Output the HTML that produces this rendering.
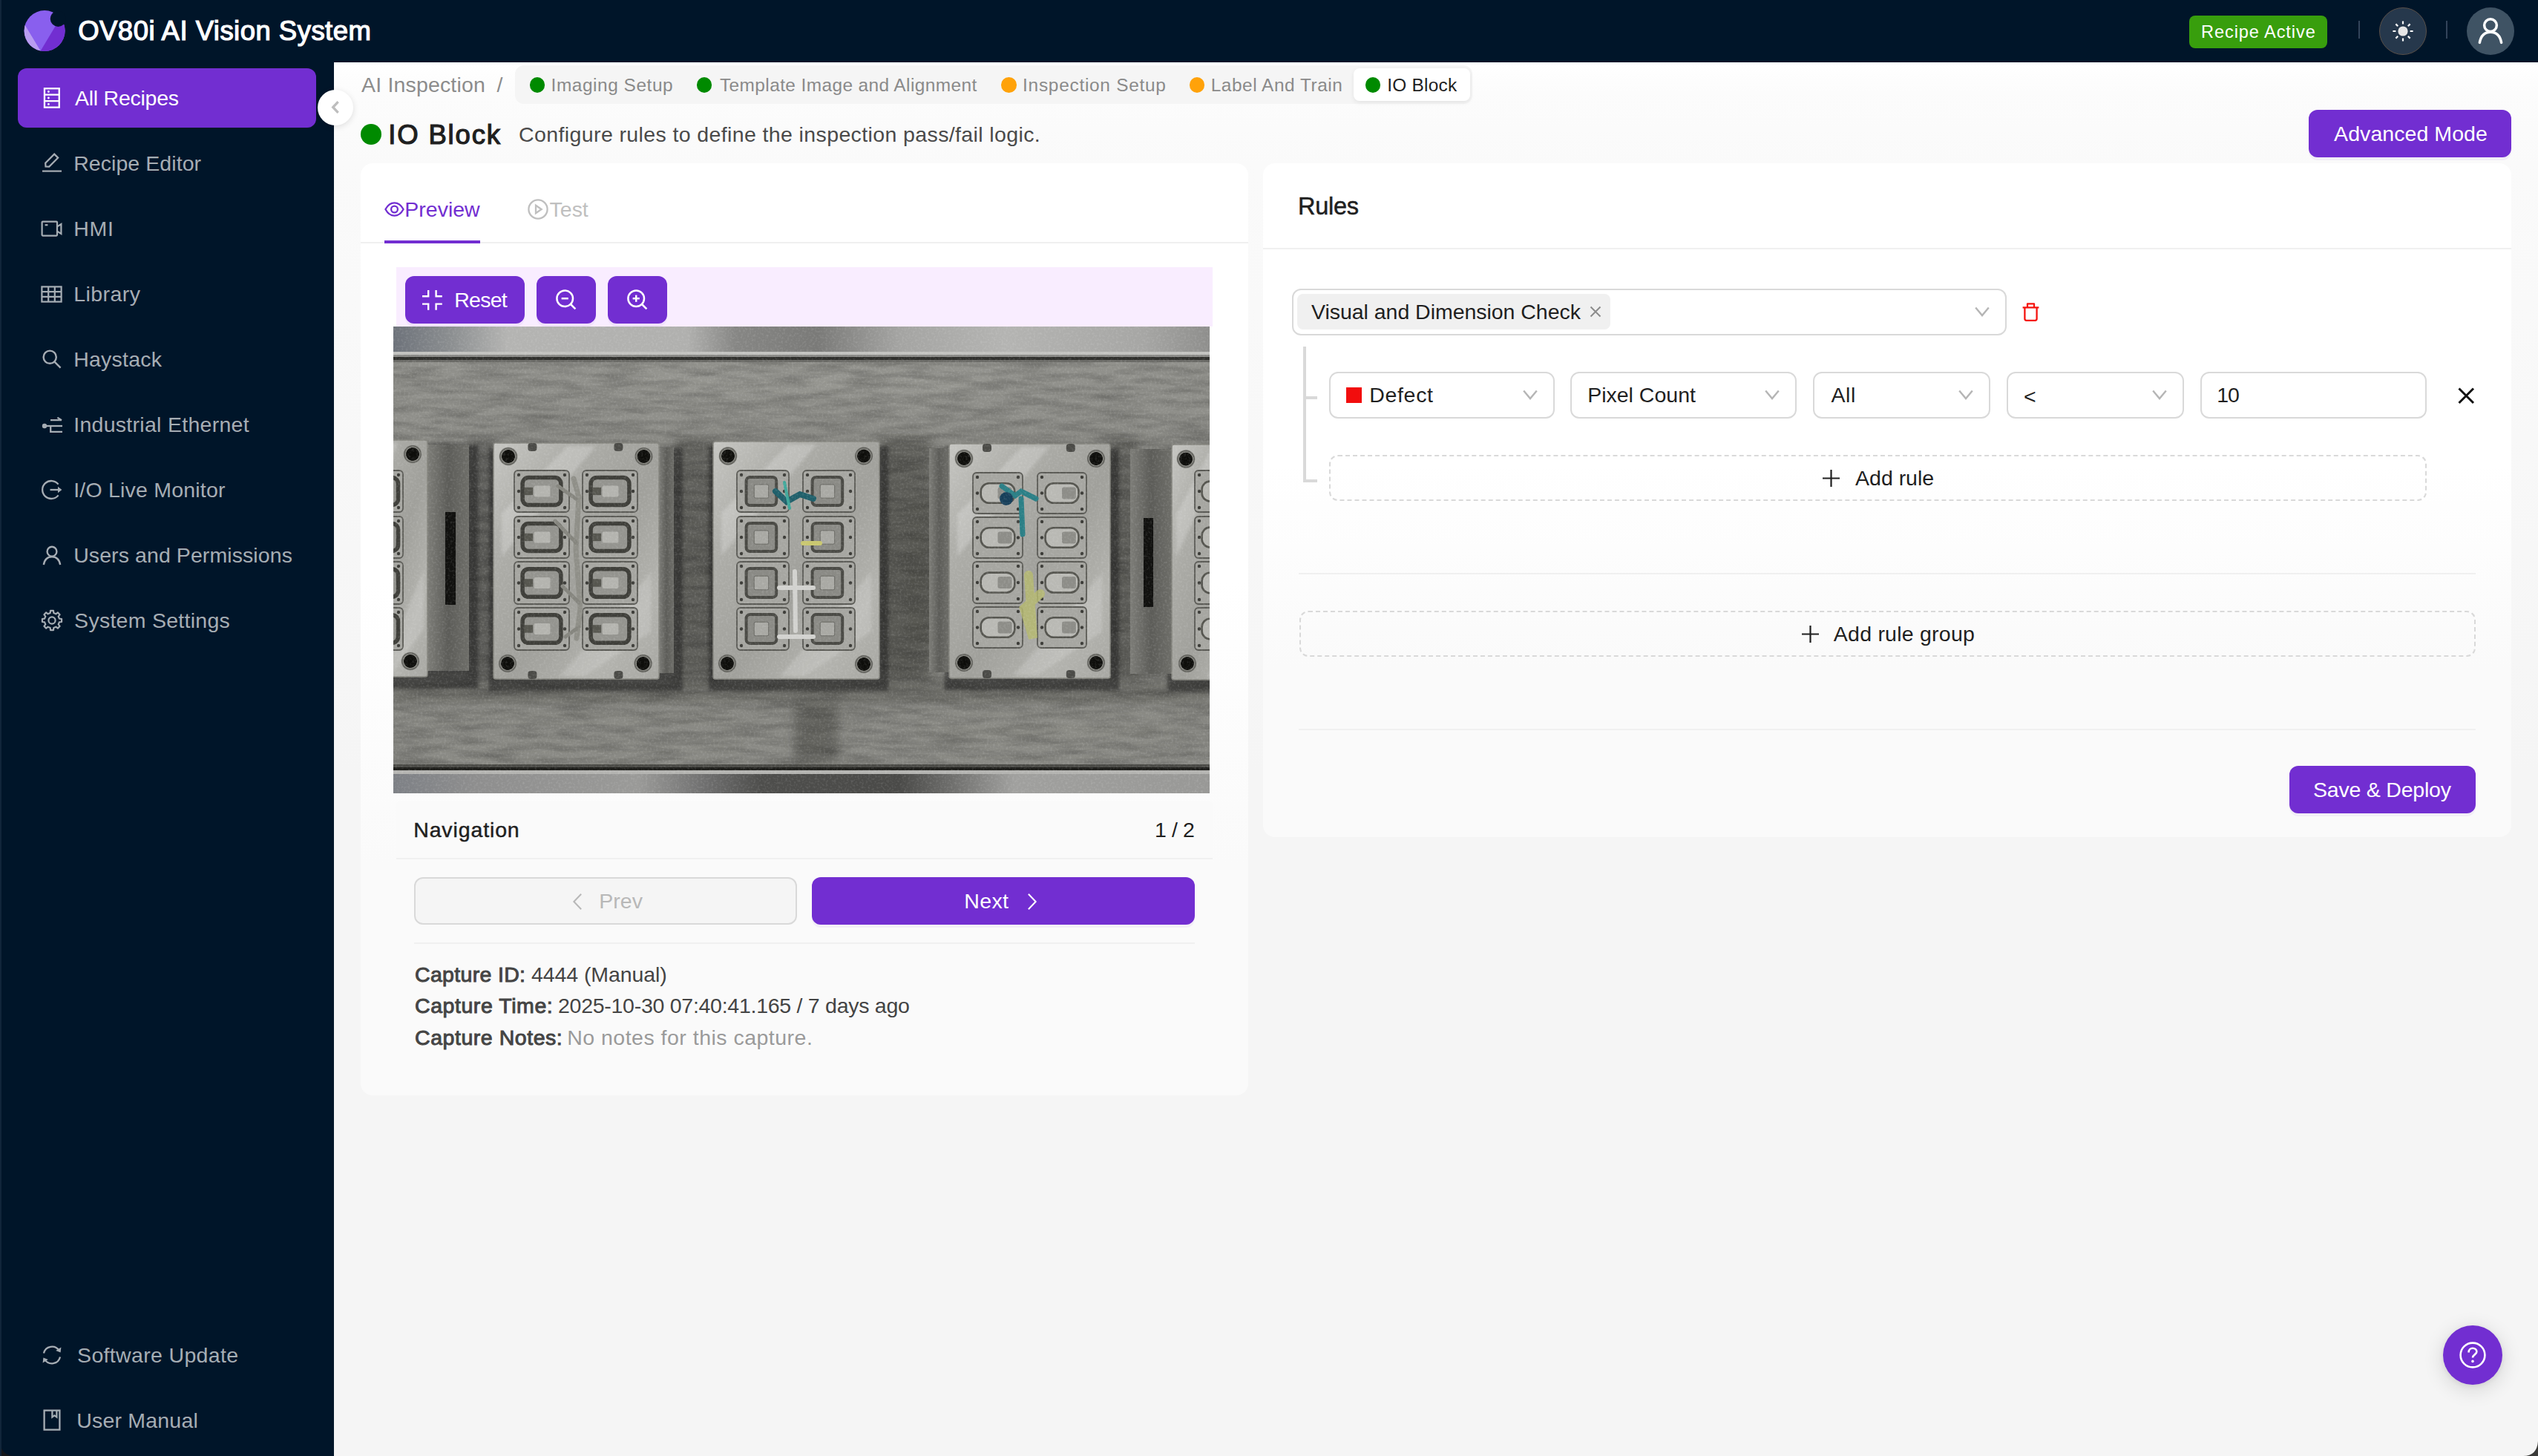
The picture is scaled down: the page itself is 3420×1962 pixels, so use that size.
<!DOCTYPE html>
<html lang="en">
<head>
<meta charset="utf-8">
<title>OV80i AI Vision System</title>
<style>
*{box-sizing:border-box;margin:0;padding:0}
html,body{width:3420px;height:1962px;overflow:hidden;background:#f5f5f5}
body{font-family:"Liberation Sans",sans-serif;color:#1f1f1f;position:relative}
#app{position:absolute;left:0;top:0;width:3420px;height:1962px;overflow:hidden;background:#f5f5f5}
header,aside,main,section,nav,div.g{position:absolute;left:0;top:0}
.b{position:absolute}
.ic{position:absolute;overflow:visible}
.t{position:absolute;white-space:nowrap;line-height:1}
.t b{font-weight:700}
#hdr{width:3420px;height:84px;background:#001529}
#side{top:84px;width:450px;height:1878px;background:#001529}
#pagehead{left:450px;top:84px;width:2970px;height:136px;background:linear-gradient(#fff,#fbfbfb 40%,#fafafa)}
.card{position:absolute;border-radius:16px;background:linear-gradient(#fff 0,#fff 45%,#fafafa 75%,#fafafa 100%)}
.btnp{position:absolute;background:#722ed1;border-radius:12px;box-shadow:0 4px 0 rgba(114,46,209,.06)}
.sel{position:absolute;height:63px;border:2px solid #d9d9d9;border-radius:12px;background:#fff}
.dash{position:absolute;border:2px dashed #d9d9d9;border-radius:12px;background:transparent}
.ln{position:absolute;background:#f0f0f0}
.dot{position:absolute;border-radius:50%}
.photo{position:absolute;left:530px;top:440px}
</style>
</head>
<body>
<div id="app">
<header id="hdr">
<svg class="ic " style="left:32px;top:14px" width="56" height="56" viewBox="0 0 56 56" ><defs><clipPath id="lgc"><circle cx="28.1" cy="27.6" r="27.5"/></clipPath></defs>
<g clip-path="url(#lgc)"><rect width="56" height="56" fill="#895fee"/>
<path d="M20.6 58 L47 14 L60 10 L60 60Z" fill="#722ed1"/>
<path d="M-4 10 L1.8 20 L22.6 54.6 L24 60 L-4 60Z" fill="#b99cf1"/></g>
<circle cx="46.4" cy="11.3" r="10.6" fill="#001529"/></svg>
<h1 class="t" id="title" style="left:105.2px;top:24.4px;font-size:36.5px;color:#fff;font-weight:400;-webkit-text-stroke:1.24px #fff;letter-spacing:0.473px;">OV80i AI Vision System</h1>
<div class="b" style="left:2950px;top:21px;width:186px;height:44px;background:#389e0d;border-radius:8px"></div>
<span class="t" id="ractive" style="left:2966.0px;top:32.2px;font-size:23.6px;color:#fff;letter-spacing:0.904px;">Recipe Active</span>
<div class="b" style="left:3178px;top:28px;width:2px;height:24px;background:#33445a"></div>
<div class="b" style="left:3296px;top:28px;width:2px;height:24px;background:#33445a"></div>
<div class="b" style="left:3206px;top:10px;width:64px;height:64px;border-radius:50%;background:#26384c;border:1.5px solid #5a5048"></div>
<svg class="ic " style="left:3223px;top:27px" width="30" height="30" viewBox="0 0 30 30" ><circle cx="15" cy="15" r="6.6" fill="#e6e6e6"/><path d="M24.60 15.00L28.60 15.00M21.79 21.79L24.62 24.62M15.00 24.60L15.00 28.60M8.21 21.79L5.38 24.62M5.40 15.00L1.40 15.00M8.21 8.21L5.38 5.38M15.00 5.40L15.00 1.40M21.79 8.21L24.62 5.38" fill="none" stroke="#fff" stroke-width="2.2" stroke-linecap="butt" stroke-linejoin="round"/></svg>
<div class="b" style="left:3324px;top:10px;width:64px;height:64px;border-radius:50%;background:#3f5364"></div>
<svg class="ic " style="left:3339px;top:23px" width="34" height="36" viewBox="0 0 26 27" ><g fill="none" stroke="#fff" stroke-width="2.7" stroke-linecap="round" stroke-linejoin="round" stroke-linecap="butt"><circle cx="13" cy="8.2" r="6.4"/><path d="M1.8 26 C3.2 18.5 7.6 15.2 13 15.2 C18.4 15.2 22.8 18.5 24.2 26"/></g></svg>
</header>
<aside id="side">
</aside>
<nav class="g">
<div class="b" style="left:24px;top:92px;width:402px;height:80px;background:#722ed1;border-radius:12px"></div>
<svg class="ic " style="left:56px;top:116px" width="28" height="32" viewBox="0 0 28 32" ><g fill="none" stroke="#fff" stroke-width="2.3" stroke-linecap="butt" stroke-linejoin="miter"><rect x="3.95" y="3.25" width="19.8" height="25.4"/><path d="M3.95 11.7H23.75M3.95 20.2H23.75"/></g><g fill="#fff"><circle cx="9.4" cy="7.5" r="1.4"/><circle cx="9.4" cy="16" r="1.4"/><circle cx="9.4" cy="24.4" r="1.4"/></g></svg>
<span class="t" id="m0" style="left:101.0px;top:118.4px;font-size:28.5px;color:#fff;letter-spacing:-0.250px;">All Recipes</span>
<svg class="ic " style="left:55px;top:204px" width="30" height="30" viewBox="0 0 30 30" ><g fill="none" stroke="#a6adb4" stroke-width="2.2" stroke-linecap="round" stroke-linejoin="round"><path d="M6.5 20.5 L6.2 15.6 L18.2 3.6 L23.2 8.6 L11.2 20.6 Z" stroke-linejoin="miter"/><path d="M2 26.6H28" stroke-linecap="butt"/></g></svg>
<span class="t" id="m1" style="left:99.2px;top:206.4px;font-size:28.5px;color:#a6adb4;letter-spacing:0.064px;">Recipe Editor</span>
<svg class="ic " style="left:55px;top:296px" width="30" height="24" viewBox="0 0 30 24" ><g fill="none" stroke="#a6adb4" stroke-width="2.2" stroke-linecap="round" stroke-linejoin="miter"><rect x="1.6" y="2.6" width="20.4" height="19" rx="1"/><path d="M22 9.4 L27.4 6 V19 L22 15.6" /><path d="M5.6 7.2H9.4" stroke-linecap="butt"/></g></svg>
<span class="t" id="m2" style="left:99.2px;top:294.4px;font-size:28.5px;color:#a6adb4;letter-spacing:0.705px;">HMI</span>
<svg class="ic " style="left:55px;top:385px" width="29" height="23" viewBox="0 0 29 23" ><g fill="none" stroke="#a6adb4" stroke-width="2.2" stroke-linecap="butt" stroke-linejoin="miter"><rect x="1.4" y="1.4" width="26.2" height="20.2"/><path d="M1.4 8.2H27.6M1.4 14.8H27.6M10.2 1.4V21.6M18.8 1.4V21.6"/></g></svg>
<span class="t" id="m3" style="left:99.2px;top:382.4px;font-size:28.5px;color:#a6adb4;letter-spacing:0.446px;">Library</span>
<svg class="ic " style="left:56px;top:470px" width="28" height="28" viewBox="0 0 28 28" ><g fill="none" stroke="#a6adb4" stroke-width="2.4" stroke-linecap="round" stroke-linejoin="round"><circle cx="11.2" cy="11.2" r="8.6"/><path d="M17.6 17.6 L25.6 25.6" stroke-linecap="butt"/></g></svg>
<span class="t" id="m4" style="left:99.2px;top:470.4px;font-size:28.5px;color:#a6adb4;letter-spacing:0.220px;">Haystack</span>
<svg class="ic " style="left:56px;top:562px" width="29" height="22" viewBox="0 0 29 22" ><g fill="none" stroke="#a6adb4" stroke-width="2.3" stroke-linecap="butt" stroke-linejoin="miter"><path d="M5 12H28"/><path d="M12 4.2H27 M21.4 0.6 L27 4.2"/><path d="M12.2 12 V19.8 H28"/></g><circle cx="4" cy="12" r="3.2" fill="#a6adb4"/></svg>
<span class="t" id="m5" style="left:99.2px;top:558.4px;font-size:28.5px;color:#a6adb4;letter-spacing:0.286px;">Industrial Ethernet</span>
<svg class="ic " style="left:55px;top:646px" width="29" height="28" viewBox="0 0 29 28" ><g fill="none" stroke="#a6adb4" stroke-width="2.3" stroke-linecap="butt" stroke-linejoin="round"><path d="M23.6 6.6 A12 12 0 1 0 23.6 21.4"/><path d="M12.5 14H25.5"/></g><path d="M23 9.8 L28.4 14 L23 18.2Z" fill="#a6adb4"/></svg>
<span class="t" id="m6" style="left:99.2px;top:646.4px;font-size:28.5px;color:#a6adb4;letter-spacing:0.214px;">I/O Live Monitor</span>
<svg class="ic " style="left:57px;top:735px" width="26" height="27" viewBox="0 0 26 27" ><g fill="none" stroke="#a6adb4" stroke-width="2.4" stroke-linecap="butt" stroke-linejoin="round"><circle cx="13" cy="8.2" r="6.4"/><path d="M1.8 26 C3.2 18.5 7.6 15.2 13 15.2 C18.4 15.2 22.8 18.5 24.2 26"/></g></svg>
<span class="t" id="m7" style="left:99.2px;top:734.4px;font-size:28.5px;color:#a6adb4;letter-spacing:0.084px;">Users and Permissions</span>
<svg class="ic " style="left:56px;top:822px" width="28" height="28" viewBox="0 0 28 28" ><g fill="none" stroke="#a6adb4" stroke-width="2.2" stroke-linecap="round" stroke-linejoin="round"><path d="M11.67 4.07 L12.03 0.95 L15.97 0.95 L16.33 4.07 L19.38 5.33 L21.83 3.38 L24.62 6.17 L22.67 8.62 L23.93 11.67 L27.05 12.03 L27.05 15.97 L23.93 16.33 L22.67 19.38 L24.62 21.83 L21.83 24.62 L19.38 22.67 L16.33 23.93 L15.97 27.05 L12.03 27.05 L11.67 23.93 L8.62 22.67 L6.17 24.62 L3.38 21.83 L5.33 19.38 L4.07 16.33 L0.95 15.97 L0.95 12.03 L4.07 11.67 L5.33 8.62 L3.38 6.17 L6.17 3.38 L8.62 5.33Z"/><circle cx="14" cy="14" r="4.6"/></g></svg>
<span class="t" id="m8" style="left:100.1px;top:822.4px;font-size:28.5px;color:#a6adb4;letter-spacing:0.273px;">System Settings</span>
<svg class="ic " style="left:56px;top:1812px" width="28" height="28" viewBox="0 0 28 28" ><g fill="none" stroke="#a6adb4" stroke-width="2.3" stroke-linecap="butt" stroke-linejoin="round"><path d="M3 11.5 A11.3 11.3 0 0 1 23.6 8"/><path d="M25 16.5 A11.3 11.3 0 0 1 4.4 20"/></g><path d="M26.4 3.6 L25.6 10.6 L19.2 8Z M1.6 24.4 L2.4 17.4 L8.8 20Z" fill="#a6adb4"/></svg>
<span class="t" id="m9" style="left:104.1px;top:1812.3px;font-size:28.5px;color:#a6adb4;letter-spacing:0.333px;">Software Update</span>
<svg class="ic " style="left:58px;top:1899px" width="24" height="30" viewBox="0 0 24 30" ><g fill="none" stroke="#a6adb4" stroke-width="2.3" stroke-linecap="butt" stroke-linejoin="miter"><rect x="1.6" y="1.6" width="20.8" height="26"/><path d="M12.4 1.6 V10.6 L15.4 8.4 L18.4 10.6 V1.6"/></g></svg>
<span class="t" id="m10" style="left:103.2px;top:1900.4px;font-size:28.5px;color:#a6adb4;letter-spacing:0.202px;">User Manual</span>
</nav>
<main class="g">
<div class="b" style="left:450px;top:84px;width:2970px;height:136px;background:linear-gradient(#fff,#fcfcfc 30%,#fafafa)"></div>
<div class="b" style="left:450px;top:220px;width:2970px;height:820px;background:linear-gradient(#fafafa,#f8f8f8 45%,#f5f5f5)"></div>
<div class="b" style="left:428px;top:120.5px;width:48px;height:48px;border-radius:50%;background:#fff;box-shadow:0 2px 8px rgba(0,0,0,.12)"></div>
<svg class="ic " style="left:446.5px;top:136px" width="10" height="17" viewBox="0 0 16 28" ><path d="M14 2 L2.6 14 L14 26" fill="none" stroke="#bdbdbd" stroke-width="5.4" stroke-linecap="butt" stroke-linejoin="miter"/></svg>
<span class="t" id="bc1" style="left:487.1px;top:100.1px;font-size:28.5px;color:#8c8c8c;letter-spacing:0.160px;">AI Inspection</span>
<span class="t" id="bc2" style="left:669.5px;top:100.1px;font-size:28.5px;color:#8c8c8c;letter-spacing:1.978px;">/</span>
<div class="b" style="left:694px;top:88px;width:1290px;height:52px;background:#f5f5f5;border-radius:12px"></div>
<div class="b" style="left:1824px;top:92px;width:157px;height:44px;background:#fff;border-radius:8px;box-shadow:0 2px 6px rgba(0,0,0,.08)"></div>
<div class="dot" style="left:713.8px;top:104px;width:20.5px;height:20.5px;background:#008a00"></div>
<span class="t" id="sg0" style="left:742.6px;top:102.8px;font-size:24.4px;color:#8a8a8a;letter-spacing:0.557px;">Imaging Setup</span>
<div class="dot" style="left:938.7px;top:104px;width:20.5px;height:20.5px;background:#008a00"></div>
<span class="t" id="sg1" style="left:970.0px;top:102.8px;font-size:24.4px;color:#8a8a8a;letter-spacing:0.417px;">Template Image and Alignment</span>
<div class="dot" style="left:1349.3px;top:104px;width:20.5px;height:20.5px;background:#ffa20a"></div>
<span class="t" id="sg2" style="left:1378.1px;top:102.8px;font-size:24.4px;color:#8a8a8a;letter-spacing:0.737px;">Inspection Setup</span>
<div class="dot" style="left:1602.7px;top:104px;width:20.5px;height:20.5px;background:#ffa20a"></div>
<span class="t" id="sg3" style="left:1631.7px;top:102.8px;font-size:24.4px;color:#8a8a8a;letter-spacing:0.549px;">Label And Train</span>
<div class="dot" style="left:1839.7px;top:104px;width:20.5px;height:20.5px;background:#008a00"></div>
<span class="t" id="sg4" style="left:1869.2px;top:102.8px;font-size:24.4px;color:#1f1f1f;letter-spacing:0.255px;">IO Block</span>
<div class="dot" style="left:486px;top:166.7px;width:28px;height:28px;background:#008a00"></div>
<h2 class="t" id="h1" style="left:523.2px;top:163.5px;font-size:36.5px;color:#1f1f1f;font-weight:400;-webkit-text-stroke:1.24px #1f1f1f;letter-spacing:1.852px;">IO Block</h2>
<span class="t" id="desc" style="left:699.1px;top:166.8px;font-size:28.5px;color:#4a4a4a;letter-spacing:0.383px;">Configure rules to define the inspection pass/fail logic.</span>
<div class="btnp" style="left:3111px;top:148px;width:273px;height:64px;"></div>
<span class="t" id="adv" style="left:3145.1px;top:166.4px;font-size:28.5px;color:#fff;letter-spacing:0.066px;">Advanced Mode</span>
<div class="card" style="left:486px;top:220px;width:1196px;height:1256px;"></div>
<svg class="ic " style="left:518px;top:271.7px" width="27" height="20" viewBox="0 0 27 20" ><g fill="none" stroke="#722ed1" stroke-width="2.3" stroke-linecap="round" stroke-linejoin="round"><path d="M1.4 10 C5 3.4 9.6 1.3 13.5 1.3 C17.4 1.3 22 3.4 25.6 10 C22 16.6 17.4 18.7 13.5 18.7 C9.6 18.7 5 16.6 1.4 10Z"/><circle cx="13.5" cy="10" r="4.4"/></g></svg>
<span class="t" id="tab1" style="left:545.3px;top:268.1px;font-size:28.5px;color:#722ed1;letter-spacing:0.004px;">Preview</span>
<svg class="ic " style="left:710.8px;top:268px" width="28" height="28" viewBox="0 0 28 28" ><g fill="none" stroke="#bfbfbf" stroke-width="2.3" stroke-linecap="round" stroke-linejoin="round"><circle cx="14" cy="14" r="12.6"/><path d="M11 8.8 L18.6 14 L11 19.2Z" stroke-linejoin="miter"/></g></svg>
<span class="t" id="tab2" style="left:740.6px;top:268.1px;font-size:28.5px;color:#bfbfbf;letter-spacing:-0.027px;">Test</span>
<div class="ln" style="left:486px;top:326px;width:1196px;height:2px;"></div>
<div class="b" style="left:518px;top:324px;width:129px;height:4px;background:#722ed1"></div>
<div class="b" style="left:534px;top:360px;width:1100px;height:80px;background:#f9edff"></div>
<div class="btnp" style="left:546px;top:372px;width:161px;height:64px;"></div>
<svg class="ic " style="left:568.7px;top:390.5px" width="27" height="27" viewBox="0 0 27 27" ><g fill="none" stroke="#fff" stroke-width="2.4" stroke-linecap="butt" stroke-linejoin="miter"><path d="M0 8.2H8.2V0"/><path d="M26.8 8.2H18.6V0"/><path d="M0 18.6H8.2V26.8"/><path d="M26.8 18.6H18.6V26.8"/></g></svg>
<span class="t" id="reset" style="left:612.3px;top:390.1px;font-size:28.5px;color:#fff;letter-spacing:-0.763px;">Reset</span>
<div class="btnp" style="left:723px;top:372px;width:80px;height:64px;"></div>
<svg class="ic " style="left:749px;top:390px" width="28" height="28" viewBox="0 0 28 28" ><g fill="none" stroke="#fff" stroke-width="2.5" stroke-linecap="butt" stroke-linejoin="round"><circle cx="12.2" cy="12.2" r="10.8"/><path d="M20 20 L26.4 26.4"/><path d="M7.6 12.2H16.8"/></g></svg>
<div class="btnp" style="left:819px;top:372px;width:80px;height:64px;"></div>
<svg class="ic " style="left:845px;top:390px" width="28" height="28" viewBox="0 0 28 28" ><g fill="none" stroke="#fff" stroke-width="2.5" stroke-linecap="butt" stroke-linejoin="round"><circle cx="12.2" cy="12.2" r="10.8"/><path d="M20 20 L26.4 26.4"/><path d="M7.6 12.2H16.8"/><path d="M12.2 7.6V16.8"/></g></svg>
<svg class="photo" width="1100" height="629" viewBox="0 0 1100 629" preserveAspectRatio="none">
<defs>
<linearGradient id="pgTop" x1="0" x2="1" y1="0" y2="0"><stop offset="0" stop-color="#6d727a"/><stop offset=".07" stop-color="#8b8e90"/><stop offset=".14" stop-color="#b4b4b2"/><stop offset=".36" stop-color="#b0b0ae"/><stop offset=".42" stop-color="#868684"/><stop offset=".52" stop-color="#7a7a78"/><stop offset=".62" stop-color="#a4a4a2"/><stop offset=".75" stop-color="#b4b4b2"/><stop offset=".92" stop-color="#a6a6a4"/><stop offset="1" stop-color="#8e8e8c"/></linearGradient>
<linearGradient id="pgBot" x1="0" x2="1" y1="0" y2="0"><stop offset="0" stop-color="#7d8085"/><stop offset=".1" stop-color="#8e8e8e"/><stop offset=".3" stop-color="#9a9a98"/><stop offset=".38" stop-color="#707070"/><stop offset=".45" stop-color="#4e4e4c"/><stop offset=".62" stop-color="#4a4a48"/><stop offset=".68" stop-color="#6c6c6a"/><stop offset=".76" stop-color="#a0a09e"/><stop offset="1" stop-color="#989896"/></linearGradient>
<linearGradient id="pgMid" x1="0" x2="0" y1="0" y2="1"><stop offset="0" stop-color="#92928d"/><stop offset=".2" stop-color="#8f8f8a"/><stop offset=".3" stop-color="#80807b"/><stop offset=".5" stop-color="#73736e"/><stop offset=".72" stop-color="#787873"/><stop offset=".8" stop-color="#888883"/><stop offset="1" stop-color="#8b8b86"/></linearGradient>
<linearGradient id="pgFace" x1="0" x2="1" y1="0" y2="1"><stop offset="0" stop-color="#c6c6c2"/><stop offset=".25" stop-color="#adada8"/><stop offset=".55" stop-color="#a0a09b"/><stop offset=".8" stop-color="#b3b3ae"/><stop offset="1" stop-color="#a8a8a3"/></linearGradient>
<linearGradient id="pgSide" x1="0" x2="1" y1="0" y2="0"><stop offset="0" stop-color="#7d7d78"/><stop offset=".5" stop-color="#5c5c58"/><stop offset="1" stop-color="#6e6e69"/></linearGradient>
<linearGradient id="pgCav" x1="0" x2="0" y1="0" y2="1"><stop offset="0" stop-color="#4b4b46"/><stop offset=".35" stop-color="#7a7a74"/><stop offset=".65" stop-color="#74746e"/><stop offset="1" stop-color="#52524c"/></linearGradient>
<radialGradient id="pgHole"><stop offset="0" stop-color="#0b0b08"/><stop offset=".68" stop-color="#12120f"/><stop offset=".74" stop-color="#8c8c86"/><stop offset=".9" stop-color="#5a5a55"/><stop offset="1" stop-color="#9b9b96"/></radialGradient>
<filter id="pgNoise" x="0" y="0" width="100%" height="100%"><feTurbulence type="fractalNoise" baseFrequency="0.018 0.11" numOctaves="4" seed="7" result="n"/><feColorMatrix type="matrix" values="0 0 0 0 0  0 0 0 0 0  0 0 0 0 0  1.5 0 0 0 -0.52"/></filter>
<filter id="pgGrain" x="0" y="0" width="100%" height="100%"><feTurbulence type="fractalNoise" baseFrequency="0.35" numOctaves="2" seed="3"/><feColorMatrix type="matrix" values="0 0 0 0 1  0 0 0 0 1  0 0 0 0 1  0.9 0 0 0 -0.42"/></filter>
<filter id="pgBlur"><feGaussianBlur stdDeviation="7"/></filter>
<filter id="pgBlur2"><feGaussianBlur stdDeviation="2.2"/></filter>
</defs>
<rect width="1100" height="629" fill="url(#pgMid)"/>
<g filter="url(#pgBlur)" opacity=".5">
<rect x="380" y="150" width="60" height="340" fill="#4a4a45"/>
<rect x="655" y="150" width="70" height="340" fill="#42423e"/>
<rect x="965" y="150" width="40" height="340" fill="#4c4c47"/>
<rect x="100" y="150" width="40" height="330" fill="#4a4a46"/>
<rect x="540" y="480" width="60" height="110" fill="#45453f"/>
<rect x="0" y="480" width="1100" height="26" fill="#585852"/>
<rect x="300" y="60" width="500" height="30" fill="#9b9b96"/>
<rect x="690" y="230" width="40" height="200" fill="#3a3a36"/>
<rect x="40" y="520" width="420" height="60" fill="#8a8a84"/>
<rect x="720" y="520" width="330" height="50" fill="#8d8d87"/>
</g>
<rect width="1100" height="629" fill="#2a2a26" filter="url(#pgNoise)" opacity=".26"/>
<rect x="0" y="0" width="1100" height="36" fill="url(#pgTop)"/>
<rect x="0" y="34" width="1100" height="5" fill="#c2c2bf"/>
<rect x="0" y="38" width="1100" height="4" fill="#8a8a87"/>
<rect x="0" y="41" width="1100" height="4" fill="#2f2f2c"/>
<rect x="0" y="45" width="1100" height="3" fill="#6a6a66"/>
<rect x="0" y="590" width="1100" height="4" fill="#4a4a46"/>
<rect x="0" y="594" width="1100" height="4" fill="#1f1f1c"/>
<rect x="0" y="598" width="1100" height="5" fill="#b4b4b1"/>
<rect x="0" y="603" width="1100" height="26" fill="url(#pgBot)"/>
<rect x="-66" y="159" width="180" height="329" fill="#1d1d1a" opacity=".55" filter="url(#pgBlur2)"/>
<rect x="46" y="159" width="56" height="305" fill="url(#pgSide)"/>
<rect x="-60" y="153" width="106" height="319" rx="3" fill="url(#pgFace)" stroke="#85857f" stroke-width="1.5"/>
<path d="M-55 249 L-12 157 L6 157 L-55 306Z" fill="#fff" opacity=".22" filter="url(#pgBlur2)"/>
<path d="M41 328 L41 408 L-2 468 L-18 468Z" fill="#fff" opacity=".16" filter="url(#pgBlur2)"/>
<circle cx="26" cy="172" r="12.5" fill="url(#pgHole)"/>
<circle cx="23" cy="451" r="12.5" fill="url(#pgHole)"/>
<rect x="-30" y="194" width="43" height="56" rx="5" fill="#a6a6a1" stroke="#5a5a55" stroke-width="1.8"/>
<rect x="-23.6" y="203.5" width="30.1" height="37.0" rx="8" fill="#94948f" stroke="#3f3f3a" stroke-width="5.5"/>
<rect x="-14.5" y="214.6" width="12.6" height="14.8" rx="2" fill="#b4b4af"/>
<rect x="-22.0" y="216.8" width="6.6" height="10.3" fill="#56564f"/>
<circle cx="-24.0" cy="200.0" r="2.2" fill="#3c3c38"/>
<circle cx="7.0" cy="200.0" r="2.2" fill="#3c3c38"/>
<circle cx="-24.0" cy="244.0" r="2.2" fill="#3c3c38"/>
<circle cx="7.0" cy="244.0" r="2.2" fill="#3c3c38"/>
<circle cx="-24.0" cy="222.0" r="2.2" fill="#3c3c38"/>
<circle cx="7.0" cy="222.0" r="2.2" fill="#3c3c38"/>
<rect x="-30" y="256" width="43" height="56" rx="5" fill="#a6a6a1" stroke="#5a5a55" stroke-width="1.8"/>
<rect x="-23.6" y="265.5" width="30.1" height="37.0" rx="8" fill="#94948f" stroke="#3f3f3a" stroke-width="5.5"/>
<rect x="-14.5" y="276.6" width="12.6" height="14.8" rx="2" fill="#b4b4af"/>
<rect x="-22.0" y="278.8" width="6.6" height="10.3" fill="#56564f"/>
<circle cx="-24.0" cy="262.0" r="2.2" fill="#3c3c38"/>
<circle cx="7.0" cy="262.0" r="2.2" fill="#3c3c38"/>
<circle cx="-24.0" cy="306.0" r="2.2" fill="#3c3c38"/>
<circle cx="7.0" cy="306.0" r="2.2" fill="#3c3c38"/>
<circle cx="-24.0" cy="284.0" r="2.2" fill="#3c3c38"/>
<circle cx="7.0" cy="284.0" r="2.2" fill="#3c3c38"/>
<rect x="-30" y="317" width="43" height="57" rx="5" fill="#a6a6a1" stroke="#5a5a55" stroke-width="1.8"/>
<rect x="-23.6" y="326.7" width="30.1" height="37.6" rx="8" fill="#94948f" stroke="#3f3f3a" stroke-width="5.5"/>
<rect x="-14.5" y="338.0" width="12.6" height="15.0" rx="2" fill="#b4b4af"/>
<rect x="-22.0" y="340.2" width="6.6" height="10.5" fill="#56564f"/>
<circle cx="-24.0" cy="323.0" r="2.2" fill="#3c3c38"/>
<circle cx="7.0" cy="323.0" r="2.2" fill="#3c3c38"/>
<circle cx="-24.0" cy="368.0" r="2.2" fill="#3c3c38"/>
<circle cx="7.0" cy="368.0" r="2.2" fill="#3c3c38"/>
<circle cx="-24.0" cy="345.5" r="2.2" fill="#3c3c38"/>
<circle cx="7.0" cy="345.5" r="2.2" fill="#3c3c38"/>
<rect x="-30" y="379" width="43" height="57" rx="5" fill="#a6a6a1" stroke="#5a5a55" stroke-width="1.8"/>
<rect x="-23.6" y="388.7" width="30.1" height="37.6" rx="8" fill="#94948f" stroke="#3f3f3a" stroke-width="5.5"/>
<rect x="-14.5" y="400.0" width="12.6" height="15.0" rx="2" fill="#b4b4af"/>
<rect x="-22.0" y="402.2" width="6.6" height="10.5" fill="#56564f"/>
<circle cx="-24.0" cy="385.0" r="2.2" fill="#3c3c38"/>
<circle cx="7.0" cy="385.0" r="2.2" fill="#3c3c38"/>
<circle cx="-24.0" cy="430.0" r="2.2" fill="#3c3c38"/>
<circle cx="7.0" cy="430.0" r="2.2" fill="#3c3c38"/>
<circle cx="-24.0" cy="407.5" r="2.2" fill="#3c3c38"/>
<circle cx="7.0" cy="407.5" r="2.2" fill="#3c3c38"/>
<rect x="70" y="250" width="14" height="125" fill="#11110f"/>
<rect x="129" y="163" width="261" height="328" fill="#1d1d1a" opacity=".55" filter="url(#pgBlur2)"/>
<rect x="358" y="163" width="20" height="304" fill="url(#pgSide)"/>
<rect x="135" y="157" width="223" height="318" rx="3" fill="url(#pgFace)" stroke="#85857f" stroke-width="1.5"/>
<path d="M146 252 L235 161 L273 161 L146 310Z" fill="#fff" opacity=".22" filter="url(#pgBlur2)"/>
<path d="M347 332 L347 411 L258 471 L224 471Z" fill="#fff" opacity=".16" filter="url(#pgBlur2)"/>
<rect x="181.4" y="157" width="12" height="11" rx="4" fill="#4b4b47"/>
<rect x="181.4" y="464" width="12" height="11" rx="4" fill="#4b4b47"/>
<rect x="297.4" y="157" width="12" height="11" rx="4" fill="#4b4b47"/>
<rect x="297.4" y="464" width="12" height="11" rx="4" fill="#4b4b47"/>
<circle cx="155" cy="175" r="12.5" fill="url(#pgHole)"/>
<circle cx="337.5" cy="175" r="12.5" fill="url(#pgHole)"/>
<circle cx="154" cy="454" r="12.5" fill="url(#pgHole)"/>
<circle cx="336.6" cy="454" r="12.5" fill="url(#pgHole)"/>
<rect x="163" y="194" width="74" height="56" rx="5" fill="#a6a6a1" stroke="#5a5a55" stroke-width="1.8"/>
<rect x="174.1" y="203.5" width="51.8" height="37.0" rx="8" fill="#94948f" stroke="#3f3f3a" stroke-width="5.5"/>
<rect x="189.6" y="214.6" width="21.8" height="14.8" rx="2" fill="#b4b4af"/>
<rect x="176.7" y="216.8" width="11.4" height="10.3" fill="#56564f"/>
<circle cx="169.0" cy="200.0" r="2.2" fill="#3c3c38"/>
<circle cx="231.0" cy="200.0" r="2.2" fill="#3c3c38"/>
<circle cx="169.0" cy="244.0" r="2.2" fill="#3c3c38"/>
<circle cx="231.0" cy="244.0" r="2.2" fill="#3c3c38"/>
<circle cx="169.0" cy="222.0" r="2.2" fill="#3c3c38"/>
<circle cx="231.0" cy="222.0" r="2.2" fill="#3c3c38"/>
<rect x="163" y="256" width="74" height="56" rx="5" fill="#a6a6a1" stroke="#5a5a55" stroke-width="1.8"/>
<rect x="174.1" y="265.5" width="51.8" height="37.0" rx="8" fill="#94948f" stroke="#3f3f3a" stroke-width="5.5"/>
<rect x="189.6" y="276.6" width="21.8" height="14.8" rx="2" fill="#b4b4af"/>
<rect x="176.7" y="278.8" width="11.4" height="10.3" fill="#56564f"/>
<circle cx="169.0" cy="262.0" r="2.2" fill="#3c3c38"/>
<circle cx="231.0" cy="262.0" r="2.2" fill="#3c3c38"/>
<circle cx="169.0" cy="306.0" r="2.2" fill="#3c3c38"/>
<circle cx="231.0" cy="306.0" r="2.2" fill="#3c3c38"/>
<circle cx="169.0" cy="284.0" r="2.2" fill="#3c3c38"/>
<circle cx="231.0" cy="284.0" r="2.2" fill="#3c3c38"/>
<rect x="163" y="317" width="74" height="57" rx="5" fill="#a6a6a1" stroke="#5a5a55" stroke-width="1.8"/>
<rect x="174.1" y="326.7" width="51.8" height="37.6" rx="8" fill="#94948f" stroke="#3f3f3a" stroke-width="5.5"/>
<rect x="189.6" y="338.0" width="21.8" height="15.0" rx="2" fill="#b4b4af"/>
<rect x="176.7" y="340.2" width="11.4" height="10.5" fill="#56564f"/>
<circle cx="169.0" cy="323.0" r="2.2" fill="#3c3c38"/>
<circle cx="231.0" cy="323.0" r="2.2" fill="#3c3c38"/>
<circle cx="169.0" cy="368.0" r="2.2" fill="#3c3c38"/>
<circle cx="231.0" cy="368.0" r="2.2" fill="#3c3c38"/>
<circle cx="169.0" cy="345.5" r="2.2" fill="#3c3c38"/>
<circle cx="231.0" cy="345.5" r="2.2" fill="#3c3c38"/>
<rect x="163" y="379" width="74" height="57" rx="5" fill="#a6a6a1" stroke="#5a5a55" stroke-width="1.8"/>
<rect x="174.1" y="388.7" width="51.8" height="37.6" rx="8" fill="#94948f" stroke="#3f3f3a" stroke-width="5.5"/>
<rect x="189.6" y="400.0" width="21.8" height="15.0" rx="2" fill="#b4b4af"/>
<rect x="176.7" y="402.2" width="11.4" height="10.5" fill="#56564f"/>
<circle cx="169.0" cy="385.0" r="2.2" fill="#3c3c38"/>
<circle cx="231.0" cy="385.0" r="2.2" fill="#3c3c38"/>
<circle cx="169.0" cy="430.0" r="2.2" fill="#3c3c38"/>
<circle cx="231.0" cy="430.0" r="2.2" fill="#3c3c38"/>
<circle cx="169.0" cy="407.5" r="2.2" fill="#3c3c38"/>
<circle cx="231.0" cy="407.5" r="2.2" fill="#3c3c38"/>
<rect x="255" y="194" width="74" height="56" rx="5" fill="#a6a6a1" stroke="#5a5a55" stroke-width="1.8"/>
<rect x="266.1" y="203.5" width="51.8" height="37.0" rx="8" fill="#94948f" stroke="#3f3f3a" stroke-width="5.5"/>
<rect x="281.6" y="214.6" width="21.8" height="14.8" rx="2" fill="#b4b4af"/>
<rect x="268.7" y="216.8" width="11.4" height="10.3" fill="#56564f"/>
<circle cx="261.0" cy="200.0" r="2.2" fill="#3c3c38"/>
<circle cx="323.0" cy="200.0" r="2.2" fill="#3c3c38"/>
<circle cx="261.0" cy="244.0" r="2.2" fill="#3c3c38"/>
<circle cx="323.0" cy="244.0" r="2.2" fill="#3c3c38"/>
<circle cx="261.0" cy="222.0" r="2.2" fill="#3c3c38"/>
<circle cx="323.0" cy="222.0" r="2.2" fill="#3c3c38"/>
<rect x="255" y="256" width="74" height="56" rx="5" fill="#a6a6a1" stroke="#5a5a55" stroke-width="1.8"/>
<rect x="266.1" y="265.5" width="51.8" height="37.0" rx="8" fill="#94948f" stroke="#3f3f3a" stroke-width="5.5"/>
<rect x="281.6" y="276.6" width="21.8" height="14.8" rx="2" fill="#b4b4af"/>
<rect x="268.7" y="278.8" width="11.4" height="10.3" fill="#56564f"/>
<circle cx="261.0" cy="262.0" r="2.2" fill="#3c3c38"/>
<circle cx="323.0" cy="262.0" r="2.2" fill="#3c3c38"/>
<circle cx="261.0" cy="306.0" r="2.2" fill="#3c3c38"/>
<circle cx="323.0" cy="306.0" r="2.2" fill="#3c3c38"/>
<circle cx="261.0" cy="284.0" r="2.2" fill="#3c3c38"/>
<circle cx="323.0" cy="284.0" r="2.2" fill="#3c3c38"/>
<rect x="255" y="317" width="74" height="57" rx="5" fill="#a6a6a1" stroke="#5a5a55" stroke-width="1.8"/>
<rect x="266.1" y="326.7" width="51.8" height="37.6" rx="8" fill="#94948f" stroke="#3f3f3a" stroke-width="5.5"/>
<rect x="281.6" y="338.0" width="21.8" height="15.0" rx="2" fill="#b4b4af"/>
<rect x="268.7" y="340.2" width="11.4" height="10.5" fill="#56564f"/>
<circle cx="261.0" cy="323.0" r="2.2" fill="#3c3c38"/>
<circle cx="323.0" cy="323.0" r="2.2" fill="#3c3c38"/>
<circle cx="261.0" cy="368.0" r="2.2" fill="#3c3c38"/>
<circle cx="323.0" cy="368.0" r="2.2" fill="#3c3c38"/>
<circle cx="261.0" cy="345.5" r="2.2" fill="#3c3c38"/>
<circle cx="323.0" cy="345.5" r="2.2" fill="#3c3c38"/>
<rect x="255" y="379" width="74" height="57" rx="5" fill="#a6a6a1" stroke="#5a5a55" stroke-width="1.8"/>
<rect x="266.1" y="388.7" width="51.8" height="37.6" rx="8" fill="#94948f" stroke="#3f3f3a" stroke-width="5.5"/>
<rect x="281.6" y="400.0" width="21.8" height="15.0" rx="2" fill="#b4b4af"/>
<rect x="268.7" y="402.2" width="11.4" height="10.5" fill="#56564f"/>
<circle cx="261.0" cy="385.0" r="2.2" fill="#3c3c38"/>
<circle cx="323.0" cy="385.0" r="2.2" fill="#3c3c38"/>
<circle cx="261.0" cy="430.0" r="2.2" fill="#3c3c38"/>
<circle cx="323.0" cy="430.0" r="2.2" fill="#3c3c38"/>
<circle cx="261.0" cy="407.5" r="2.2" fill="#3c3c38"/>
<circle cx="323.0" cy="407.5" r="2.2" fill="#3c3c38"/>
<rect x="425" y="161" width="242" height="330" fill="#1d1d1a" opacity=".55" filter="url(#pgBlur2)"/>
<rect x="431" y="155" width="224" height="320" rx="3" fill="url(#pgFace)" stroke="#85857f" stroke-width="1.5"/>
<path d="M442 251 L532 159 L570 159 L442 309Z" fill="#fff" opacity=".22" filter="url(#pgBlur2)"/>
<path d="M644 331 L644 411 L554 471 L521 471Z" fill="#fff" opacity=".16" filter="url(#pgBlur2)"/>
<circle cx="451" cy="174.5" r="12.5" fill="url(#pgHole)"/>
<circle cx="634" cy="174.5" r="12.5" fill="url(#pgHole)"/>
<circle cx="450" cy="454" r="12.5" fill="url(#pgHole)"/>
<circle cx="634" cy="455" r="12.5" fill="url(#pgHole)"/>
<rect x="463" y="194" width="70" height="56" rx="5" fill="#a6a6a1" stroke="#5a5a55" stroke-width="1.8"/>
<rect x="475.6" y="203.0" width="40.6" height="38.1" rx="5" fill="#8a8a85" stroke="#4a4a45" stroke-width="4"/>
<rect x="486.2" y="212.9" width="19.5" height="18.3" rx="2" fill="#a9a9a4" stroke="#6a6a65" stroke-width="1"/>
<circle cx="469.0" cy="200.0" r="2.2" fill="#3c3c38"/>
<circle cx="527.0" cy="200.0" r="2.2" fill="#3c3c38"/>
<circle cx="469.0" cy="244.0" r="2.2" fill="#3c3c38"/>
<circle cx="527.0" cy="244.0" r="2.2" fill="#3c3c38"/>
<circle cx="469.0" cy="222.0" r="2.2" fill="#3c3c38"/>
<circle cx="527.0" cy="222.0" r="2.2" fill="#3c3c38"/>
<rect x="463" y="256" width="70" height="56" rx="5" fill="#a6a6a1" stroke="#5a5a55" stroke-width="1.8"/>
<rect x="475.6" y="265.0" width="40.6" height="38.1" rx="5" fill="#8a8a85" stroke="#4a4a45" stroke-width="4"/>
<rect x="486.2" y="274.9" width="19.5" height="18.3" rx="2" fill="#a9a9a4" stroke="#6a6a65" stroke-width="1"/>
<circle cx="469.0" cy="262.0" r="2.2" fill="#3c3c38"/>
<circle cx="527.0" cy="262.0" r="2.2" fill="#3c3c38"/>
<circle cx="469.0" cy="306.0" r="2.2" fill="#3c3c38"/>
<circle cx="527.0" cy="306.0" r="2.2" fill="#3c3c38"/>
<circle cx="469.0" cy="284.0" r="2.2" fill="#3c3c38"/>
<circle cx="527.0" cy="284.0" r="2.2" fill="#3c3c38"/>
<rect x="463" y="317" width="70" height="57" rx="5" fill="#a6a6a1" stroke="#5a5a55" stroke-width="1.8"/>
<rect x="475.6" y="326.1" width="40.6" height="38.8" rx="5" fill="#8a8a85" stroke="#4a4a45" stroke-width="4"/>
<rect x="486.2" y="336.2" width="19.5" height="18.6" rx="2" fill="#a9a9a4" stroke="#6a6a65" stroke-width="1"/>
<circle cx="469.0" cy="323.0" r="2.2" fill="#3c3c38"/>
<circle cx="527.0" cy="323.0" r="2.2" fill="#3c3c38"/>
<circle cx="469.0" cy="368.0" r="2.2" fill="#3c3c38"/>
<circle cx="527.0" cy="368.0" r="2.2" fill="#3c3c38"/>
<circle cx="469.0" cy="345.5" r="2.2" fill="#3c3c38"/>
<circle cx="527.0" cy="345.5" r="2.2" fill="#3c3c38"/>
<rect x="463" y="379" width="70" height="57" rx="5" fill="#a6a6a1" stroke="#5a5a55" stroke-width="1.8"/>
<rect x="475.6" y="388.1" width="40.6" height="38.8" rx="5" fill="#8a8a85" stroke="#4a4a45" stroke-width="4"/>
<rect x="486.2" y="398.2" width="19.5" height="18.6" rx="2" fill="#a9a9a4" stroke="#6a6a65" stroke-width="1"/>
<circle cx="469.0" cy="385.0" r="2.2" fill="#3c3c38"/>
<circle cx="527.0" cy="385.0" r="2.2" fill="#3c3c38"/>
<circle cx="469.0" cy="430.0" r="2.2" fill="#3c3c38"/>
<circle cx="527.0" cy="430.0" r="2.2" fill="#3c3c38"/>
<circle cx="469.0" cy="407.5" r="2.2" fill="#3c3c38"/>
<circle cx="527.0" cy="407.5" r="2.2" fill="#3c3c38"/>
<rect x="552" y="194" width="70" height="56" rx="5" fill="#a6a6a1" stroke="#5a5a55" stroke-width="1.8"/>
<rect x="564.6" y="203.0" width="40.6" height="38.1" rx="5" fill="#8a8a85" stroke="#4a4a45" stroke-width="4"/>
<rect x="575.2" y="212.9" width="19.5" height="18.3" rx="2" fill="#a9a9a4" stroke="#6a6a65" stroke-width="1"/>
<circle cx="558.0" cy="200.0" r="2.2" fill="#3c3c38"/>
<circle cx="616.0" cy="200.0" r="2.2" fill="#3c3c38"/>
<circle cx="558.0" cy="244.0" r="2.2" fill="#3c3c38"/>
<circle cx="616.0" cy="244.0" r="2.2" fill="#3c3c38"/>
<circle cx="558.0" cy="222.0" r="2.2" fill="#3c3c38"/>
<circle cx="616.0" cy="222.0" r="2.2" fill="#3c3c38"/>
<rect x="552" y="256" width="70" height="56" rx="5" fill="#a6a6a1" stroke="#5a5a55" stroke-width="1.8"/>
<rect x="564.6" y="265.0" width="40.6" height="38.1" rx="5" fill="#8a8a85" stroke="#4a4a45" stroke-width="4"/>
<rect x="575.2" y="274.9" width="19.5" height="18.3" rx="2" fill="#a9a9a4" stroke="#6a6a65" stroke-width="1"/>
<circle cx="558.0" cy="262.0" r="2.2" fill="#3c3c38"/>
<circle cx="616.0" cy="262.0" r="2.2" fill="#3c3c38"/>
<circle cx="558.0" cy="306.0" r="2.2" fill="#3c3c38"/>
<circle cx="616.0" cy="306.0" r="2.2" fill="#3c3c38"/>
<circle cx="558.0" cy="284.0" r="2.2" fill="#3c3c38"/>
<circle cx="616.0" cy="284.0" r="2.2" fill="#3c3c38"/>
<rect x="552" y="317" width="70" height="57" rx="5" fill="#a6a6a1" stroke="#5a5a55" stroke-width="1.8"/>
<rect x="564.6" y="326.1" width="40.6" height="38.8" rx="5" fill="#8a8a85" stroke="#4a4a45" stroke-width="4"/>
<rect x="575.2" y="336.2" width="19.5" height="18.6" rx="2" fill="#a9a9a4" stroke="#6a6a65" stroke-width="1"/>
<circle cx="558.0" cy="323.0" r="2.2" fill="#3c3c38"/>
<circle cx="616.0" cy="323.0" r="2.2" fill="#3c3c38"/>
<circle cx="558.0" cy="368.0" r="2.2" fill="#3c3c38"/>
<circle cx="616.0" cy="368.0" r="2.2" fill="#3c3c38"/>
<circle cx="558.0" cy="345.5" r="2.2" fill="#3c3c38"/>
<circle cx="616.0" cy="345.5" r="2.2" fill="#3c3c38"/>
<rect x="552" y="379" width="70" height="57" rx="5" fill="#a6a6a1" stroke="#5a5a55" stroke-width="1.8"/>
<rect x="564.6" y="388.1" width="40.6" height="38.8" rx="5" fill="#8a8a85" stroke="#4a4a45" stroke-width="4"/>
<rect x="575.2" y="398.2" width="19.5" height="18.6" rx="2" fill="#a9a9a4" stroke="#6a6a65" stroke-width="1"/>
<circle cx="558.0" cy="385.0" r="2.2" fill="#3c3c38"/>
<circle cx="616.0" cy="385.0" r="2.2" fill="#3c3c38"/>
<circle cx="558.0" cy="430.0" r="2.2" fill="#3c3c38"/>
<circle cx="616.0" cy="430.0" r="2.2" fill="#3c3c38"/>
<circle cx="558.0" cy="407.5" r="2.2" fill="#3c3c38"/>
<circle cx="616.0" cy="407.5" r="2.2" fill="#3c3c38"/>
<rect x="743" y="164" width="235" height="326" fill="#1d1d1a" opacity=".55" filter="url(#pgBlur2)"/>
<rect x="722" y="164" width="27" height="302" fill="url(#pgSide)"/>
<rect x="749" y="158" width="217" height="316" rx="3" fill="url(#pgFace)" stroke="#85857f" stroke-width="1.5"/>
<path d="M760 253 L847 162 L884 162 L760 310Z" fill="#fff" opacity=".22" filter="url(#pgBlur2)"/>
<path d="M955 332 L955 411 L868 470 L836 470Z" fill="#fff" opacity=".16" filter="url(#pgBlur2)"/>
<rect x="794.0" y="158" width="12" height="11" rx="4" fill="#4b4b47"/>
<rect x="794.0" y="463" width="12" height="11" rx="4" fill="#4b4b47"/>
<rect x="906.8" y="158" width="12" height="11" rx="4" fill="#4b4b47"/>
<rect x="906.8" y="463" width="12" height="11" rx="4" fill="#4b4b47"/>
<circle cx="769" cy="178" r="12.5" fill="url(#pgHole)"/>
<circle cx="947" cy="178" r="12.5" fill="url(#pgHole)"/>
<circle cx="769" cy="453" r="12.5" fill="url(#pgHole)"/>
<circle cx="947" cy="453" r="12.5" fill="url(#pgHole)"/>
<rect x="781" y="197" width="67" height="55" rx="5" fill="#a6a6a1" stroke="#5a5a55" stroke-width="1.8"/>
<rect x="791.7" y="211.3" width="45.6" height="26.4" rx="11" fill="#b9b9b4" stroke="#55554f" stroke-width="2.6"/>
<rect x="814.5" y="216.6" width="19.1" height="15.8" rx="3" fill="#8d8d88"/>
<circle cx="787.0" cy="203.0" r="2.2" fill="#3c3c38"/>
<circle cx="842.0" cy="203.0" r="2.2" fill="#3c3c38"/>
<circle cx="787.0" cy="246.0" r="2.2" fill="#3c3c38"/>
<circle cx="842.0" cy="246.0" r="2.2" fill="#3c3c38"/>
<circle cx="787.0" cy="224.5" r="2.2" fill="#3c3c38"/>
<circle cx="842.0" cy="224.5" r="2.2" fill="#3c3c38"/>
<rect x="781" y="257" width="67" height="55" rx="5" fill="#a6a6a1" stroke="#5a5a55" stroke-width="1.8"/>
<rect x="791.7" y="271.3" width="45.6" height="26.4" rx="11" fill="#b9b9b4" stroke="#55554f" stroke-width="2.6"/>
<rect x="814.5" y="276.6" width="19.1" height="15.8" rx="3" fill="#8d8d88"/>
<circle cx="787.0" cy="263.0" r="2.2" fill="#3c3c38"/>
<circle cx="842.0" cy="263.0" r="2.2" fill="#3c3c38"/>
<circle cx="787.0" cy="306.0" r="2.2" fill="#3c3c38"/>
<circle cx="842.0" cy="306.0" r="2.2" fill="#3c3c38"/>
<circle cx="787.0" cy="284.5" r="2.2" fill="#3c3c38"/>
<circle cx="842.0" cy="284.5" r="2.2" fill="#3c3c38"/>
<rect x="781" y="317" width="67" height="56" rx="5" fill="#a6a6a1" stroke="#5a5a55" stroke-width="1.8"/>
<rect x="791.7" y="331.6" width="45.6" height="26.9" rx="11" fill="#b9b9b4" stroke="#55554f" stroke-width="2.6"/>
<rect x="814.5" y="336.9" width="19.1" height="16.1" rx="3" fill="#8d8d88"/>
<circle cx="787.0" cy="323.0" r="2.2" fill="#3c3c38"/>
<circle cx="842.0" cy="323.0" r="2.2" fill="#3c3c38"/>
<circle cx="787.0" cy="367.0" r="2.2" fill="#3c3c38"/>
<circle cx="842.0" cy="367.0" r="2.2" fill="#3c3c38"/>
<circle cx="787.0" cy="345.0" r="2.2" fill="#3c3c38"/>
<circle cx="842.0" cy="345.0" r="2.2" fill="#3c3c38"/>
<rect x="781" y="378" width="67" height="55" rx="5" fill="#a6a6a1" stroke="#5a5a55" stroke-width="1.8"/>
<rect x="791.7" y="392.3" width="45.6" height="26.4" rx="11" fill="#b9b9b4" stroke="#55554f" stroke-width="2.6"/>
<rect x="814.5" y="397.6" width="19.1" height="15.8" rx="3" fill="#8d8d88"/>
<circle cx="787.0" cy="384.0" r="2.2" fill="#3c3c38"/>
<circle cx="842.0" cy="384.0" r="2.2" fill="#3c3c38"/>
<circle cx="787.0" cy="427.0" r="2.2" fill="#3c3c38"/>
<circle cx="842.0" cy="427.0" r="2.2" fill="#3c3c38"/>
<circle cx="787.0" cy="405.5" r="2.2" fill="#3c3c38"/>
<circle cx="842.0" cy="405.5" r="2.2" fill="#3c3c38"/>
<rect x="868" y="197" width="66" height="55" rx="5" fill="#a6a6a1" stroke="#5a5a55" stroke-width="1.8"/>
<rect x="878.6" y="211.3" width="44.9" height="26.4" rx="11" fill="#b9b9b4" stroke="#55554f" stroke-width="2.6"/>
<rect x="901.0" y="216.6" width="18.8" height="15.8" rx="3" fill="#8d8d88"/>
<circle cx="874.0" cy="203.0" r="2.2" fill="#3c3c38"/>
<circle cx="928.0" cy="203.0" r="2.2" fill="#3c3c38"/>
<circle cx="874.0" cy="246.0" r="2.2" fill="#3c3c38"/>
<circle cx="928.0" cy="246.0" r="2.2" fill="#3c3c38"/>
<circle cx="874.0" cy="224.5" r="2.2" fill="#3c3c38"/>
<circle cx="928.0" cy="224.5" r="2.2" fill="#3c3c38"/>
<rect x="868" y="257" width="66" height="55" rx="5" fill="#a6a6a1" stroke="#5a5a55" stroke-width="1.8"/>
<rect x="878.6" y="271.3" width="44.9" height="26.4" rx="11" fill="#b9b9b4" stroke="#55554f" stroke-width="2.6"/>
<rect x="901.0" y="276.6" width="18.8" height="15.8" rx="3" fill="#8d8d88"/>
<circle cx="874.0" cy="263.0" r="2.2" fill="#3c3c38"/>
<circle cx="928.0" cy="263.0" r="2.2" fill="#3c3c38"/>
<circle cx="874.0" cy="306.0" r="2.2" fill="#3c3c38"/>
<circle cx="928.0" cy="306.0" r="2.2" fill="#3c3c38"/>
<circle cx="874.0" cy="284.5" r="2.2" fill="#3c3c38"/>
<circle cx="928.0" cy="284.5" r="2.2" fill="#3c3c38"/>
<rect x="868" y="317" width="66" height="56" rx="5" fill="#a6a6a1" stroke="#5a5a55" stroke-width="1.8"/>
<rect x="878.6" y="331.6" width="44.9" height="26.9" rx="11" fill="#b9b9b4" stroke="#55554f" stroke-width="2.6"/>
<rect x="901.0" y="336.9" width="18.8" height="16.1" rx="3" fill="#8d8d88"/>
<circle cx="874.0" cy="323.0" r="2.2" fill="#3c3c38"/>
<circle cx="928.0" cy="323.0" r="2.2" fill="#3c3c38"/>
<circle cx="874.0" cy="367.0" r="2.2" fill="#3c3c38"/>
<circle cx="928.0" cy="367.0" r="2.2" fill="#3c3c38"/>
<circle cx="874.0" cy="345.0" r="2.2" fill="#3c3c38"/>
<circle cx="928.0" cy="345.0" r="2.2" fill="#3c3c38"/>
<rect x="868" y="378" width="66" height="55" rx="5" fill="#a6a6a1" stroke="#5a5a55" stroke-width="1.8"/>
<rect x="878.6" y="392.3" width="44.9" height="26.4" rx="11" fill="#b9b9b4" stroke="#55554f" stroke-width="2.6"/>
<rect x="901.0" y="397.6" width="18.8" height="15.8" rx="3" fill="#8d8d88"/>
<circle cx="874.0" cy="384.0" r="2.2" fill="#3c3c38"/>
<circle cx="928.0" cy="384.0" r="2.2" fill="#3c3c38"/>
<circle cx="874.0" cy="427.0" r="2.2" fill="#3c3c38"/>
<circle cx="928.0" cy="427.0" r="2.2" fill="#3c3c38"/>
<circle cx="874.0" cy="405.5" r="2.2" fill="#3c3c38"/>
<circle cx="928.0" cy="405.5" r="2.2" fill="#3c3c38"/>
<rect x="1043" y="165" width="138" height="327" fill="#1d1d1a" opacity=".55" filter="url(#pgBlur2)"/>
<rect x="993" y="165" width="56" height="303" fill="url(#pgSide)"/>
<rect x="1049" y="159" width="120" height="317" rx="3" fill="url(#pgFace)" stroke="#85857f" stroke-width="1.5"/>
<path d="M1055 254 L1103 163 L1123 163 L1055 311Z" fill="#fff" opacity=".22" filter="url(#pgBlur2)"/>
<path d="M1163 333 L1163 413 L1115 472 L1097 472Z" fill="#fff" opacity=".16" filter="url(#pgBlur2)"/>
<circle cx="1068" cy="178.6" r="12.5" fill="url(#pgHole)"/>
<circle cx="1070" cy="454" r="12.5" fill="url(#pgHole)"/>
<rect x="1080" y="194" width="60" height="56" rx="5" fill="#a6a6a1" stroke="#5a5a55" stroke-width="1.8"/>
<rect x="1089.6" y="208.6" width="40.8" height="26.9" rx="11" fill="#b9b9b4" stroke="#55554f" stroke-width="2.6"/>
<rect x="1110.0" y="213.9" width="17.1" height="16.1" rx="3" fill="#8d8d88"/>
<circle cx="1086.0" cy="200.0" r="2.2" fill="#3c3c38"/>
<circle cx="1134.0" cy="200.0" r="2.2" fill="#3c3c38"/>
<circle cx="1086.0" cy="244.0" r="2.2" fill="#3c3c38"/>
<circle cx="1134.0" cy="244.0" r="2.2" fill="#3c3c38"/>
<circle cx="1086.0" cy="222.0" r="2.2" fill="#3c3c38"/>
<circle cx="1134.0" cy="222.0" r="2.2" fill="#3c3c38"/>
<rect x="1080" y="256" width="60" height="56" rx="5" fill="#a6a6a1" stroke="#5a5a55" stroke-width="1.8"/>
<rect x="1089.6" y="270.6" width="40.8" height="26.9" rx="11" fill="#b9b9b4" stroke="#55554f" stroke-width="2.6"/>
<rect x="1110.0" y="275.9" width="17.1" height="16.1" rx="3" fill="#8d8d88"/>
<circle cx="1086.0" cy="262.0" r="2.2" fill="#3c3c38"/>
<circle cx="1134.0" cy="262.0" r="2.2" fill="#3c3c38"/>
<circle cx="1086.0" cy="306.0" r="2.2" fill="#3c3c38"/>
<circle cx="1134.0" cy="306.0" r="2.2" fill="#3c3c38"/>
<circle cx="1086.0" cy="284.0" r="2.2" fill="#3c3c38"/>
<circle cx="1134.0" cy="284.0" r="2.2" fill="#3c3c38"/>
<rect x="1080" y="317" width="60" height="57" rx="5" fill="#a6a6a1" stroke="#5a5a55" stroke-width="1.8"/>
<rect x="1089.6" y="331.8" width="40.8" height="27.4" rx="11" fill="#b9b9b4" stroke="#55554f" stroke-width="2.6"/>
<rect x="1110.0" y="337.3" width="17.1" height="16.4" rx="3" fill="#8d8d88"/>
<circle cx="1086.0" cy="323.0" r="2.2" fill="#3c3c38"/>
<circle cx="1134.0" cy="323.0" r="2.2" fill="#3c3c38"/>
<circle cx="1086.0" cy="368.0" r="2.2" fill="#3c3c38"/>
<circle cx="1134.0" cy="368.0" r="2.2" fill="#3c3c38"/>
<circle cx="1086.0" cy="345.5" r="2.2" fill="#3c3c38"/>
<circle cx="1134.0" cy="345.5" r="2.2" fill="#3c3c38"/>
<rect x="1080" y="379" width="60" height="57" rx="5" fill="#a6a6a1" stroke="#5a5a55" stroke-width="1.8"/>
<rect x="1089.6" y="393.8" width="40.8" height="27.4" rx="11" fill="#b9b9b4" stroke="#55554f" stroke-width="2.6"/>
<rect x="1110.0" y="399.3" width="17.1" height="16.4" rx="3" fill="#8d8d88"/>
<circle cx="1086.0" cy="385.0" r="2.2" fill="#3c3c38"/>
<circle cx="1134.0" cy="385.0" r="2.2" fill="#3c3c38"/>
<circle cx="1086.0" cy="430.0" r="2.2" fill="#3c3c38"/>
<circle cx="1134.0" cy="430.0" r="2.2" fill="#3c3c38"/>
<circle cx="1086.0" cy="407.5" r="2.2" fill="#3c3c38"/>
<circle cx="1134.0" cy="407.5" r="2.2" fill="#3c3c38"/>
<rect x="1011" y="258" width="13" height="120" fill="#11110f"/>
<path d="M243 205 L250 230 L246 300 L252 380 L247 420" stroke="#8f8f88" stroke-width="7" fill="none" stroke-linecap="round"/>
<path d="M222 215 L246 232 M218 262 L247 292 M228 350 L250 372 M232 418 L250 405" stroke="#85857e" stroke-width="5" fill="none" stroke-linecap="round"/>
<path d="M515 222 L530 236 L548 226 L566 232" stroke="#1f5f6a" stroke-width="8" fill="none" stroke-linecap="round"/>
<path d="M527 210 L534 245" stroke="#3fa79a" stroke-width="4" fill="none" stroke-linecap="round"/>
<path d="M541 330 L542 410 M520 352 L566 352 M520 418 L566 418" stroke="#d2d2cf" stroke-width="6" fill="none" stroke-linecap="round"/>
<path d="M552 292 L575 292" stroke="#c9c76f" stroke-width="6" fill="none" stroke-linecap="round"/>
<path d="M820 215 L838 228 L846 222 L866 232 M846 232 L848 280" stroke="#2b7f86" stroke-width="7" fill="none" stroke-linecap="round"/>
<circle cx="826" cy="232" r="9" fill="#173f5a"/>
<path d="M856 335 L862 420 L850 380 L872 360" stroke="#b7ba6e" stroke-width="12" fill="none" stroke-linecap="round" opacity=".8"/>
<rect width="1100" height="629" filter="url(#pgGrain)" opacity=".35"/>
</svg>
<div class="b" style="left:534px;top:1080px;width:1100px;height:77px;background:#fafafa;border-radius:4px 4px 0 0"></div>
<div class="ln" style="left:534px;top:1156px;width:1100px;height:2px;"></div>
<span class="t" id="nav" style="left:557.2px;top:1104.1px;font-size:28.5px;color:#1f1f1f;font-weight:400;-webkit-text-stroke:0.46px #1f1f1f;letter-spacing:0.874px;">Navigation</span>
<span class="t" id="pg" style="left:1556.0px;top:1104.1px;font-size:28.5px;color:#1f1f1f;letter-spacing:-0.417px;">1 / 2</span>
<div class="b" style="left:558px;top:1182px;width:516px;height:64px;background:#f5f5f5;border:2px solid #d9d9d9;border-radius:12px"></div>
<svg class="ic " style="left:770px;top:1202.5px" width="16" height="24" viewBox="0 0 16 28" ><path d="M14 2 L2.6 14 L14 26" fill="none" stroke="#b8b8b8" stroke-width="2.4" stroke-linecap="butt" stroke-linejoin="miter"/></svg>
<span class="t" id="prev" style="left:807.3px;top:1200.3px;font-size:28.5px;color:#b8b8b8;letter-spacing:0.030px;">Prev</span>
<div class="btnp" style="left:1094px;top:1182px;width:516px;height:64px;"></div>
<span class="t" id="next" style="left:1299.2px;top:1200.3px;font-size:28.5px;color:#fff;letter-spacing:0.397px;">Next</span>
<svg class="ic " style="left:1382.5px;top:1202.5px" width="16" height="24" viewBox="0 0 16 28" ><path d="M2 2 L13.4 14 L2 26" fill="none" stroke="#fff" stroke-width="2.4" stroke-linecap="butt" stroke-linejoin="miter"/></svg>
<div class="ln" style="left:558px;top:1270px;width:1052px;height:2px;"></div>
<span class="t" id="c1a" style="left:559.0px;top:1299.1px;font-size:28.5px;color:#444;font-weight:400;-webkit-text-stroke:0.97px #444;letter-spacing:0.323px;">Capture ID:</span>
<span class="t" id="c1b" style="left:716.0px;top:1299.1px;font-size:28.5px;color:#444;letter-spacing:-0.087px;">4444 (Manual)</span>
<span class="t" id="c2a" style="left:559.0px;top:1340.7px;font-size:28.5px;color:#444;font-weight:400;-webkit-text-stroke:0.97px #444;letter-spacing:0.562px;">Capture Time:</span>
<span class="t" id="c2b" style="left:752.0px;top:1340.7px;font-size:28.5px;color:#444;letter-spacing:-0.270px;">2025-10-30 07:40:41.165 / 7 days ago</span>
<span class="t" id="c3a" style="left:559.0px;top:1384.1px;font-size:28.5px;color:#444;font-weight:400;-webkit-text-stroke:0.97px #444;letter-spacing:0.547px;">Capture Notes:</span>
<span class="t" id="c3b" style="left:764.2px;top:1384.1px;font-size:28.5px;color:#9a9a9a;letter-spacing:0.490px;">No notes for this capture.</span>
<div class="card" style="left:1702px;top:220px;width:1682px;height:908px;"></div>
<h3 class="t" id="rules" style="left:1749.1px;top:261.8px;font-size:32.5px;color:#1f1f1f;font-weight:400;-webkit-text-stroke:0.52px #1f1f1f;letter-spacing:-0.293px;">Rules</h3>
<div class="ln" style="left:1702px;top:333.5px;width:1682px;height:2px;"></div>
<div class="sel" style="left:1741px;top:388.5px;width:962.5px;height:63px;height:63.5px"></div>
<div class="b" style="left:1748px;top:396px;width:422px;height:48px;background:#f0f0f0;border-radius:8px"></div>
<span class="t" id="tag" style="left:1767.0px;top:406.1px;font-size:28.5px;color:#1f1f1f;letter-spacing:-0.036px;">Visual and Dimension Check</span>
<svg class="ic " style="left:2142px;top:412px" width="16" height="16" viewBox="0 0 16 16" ><path d="M1.5 1.5 L14.5 14.5 M14.5 1.5 L1.5 14.5" fill="none" stroke="#8c8c8c" stroke-width="2" stroke-linecap="butt" stroke-linejoin="round"/></svg>
<svg class="ic " style="left:2660.5px;top:413px" width="20" height="14" viewBox="0 0 20 14" ><path d="M1.2 1.4 L10 12 L18.8 1.4" fill="none" stroke="#b5b5b5" stroke-width="2.4" stroke-linecap="butt" stroke-linejoin="miter"/></svg>
<svg class="ic " style="left:2724.5px;top:407.5px" width="23" height="25" viewBox="0 0 23 25" ><g fill="none" stroke="#f5140f" stroke-width="2.3" stroke-linecap="butt" stroke-linejoin="round"><path d="M0.6 6.4H22.4"/><path d="M7 6 V1.4 H16 V6"/><path d="M3.4 6.6 V21.6 Q3.4 23.8 5.6 23.8 H17.4 Q19.6 23.8 19.6 21.6 V6.6"/></g></svg>
<div class="b" style="left:1756.3px;top:466.7px;width:4px;height:183.5px;background:#d9d9d9"></div>
<div class="b" style="left:1756.3px;top:534.2px;width:19px;height:4px;background:#d9d9d9"></div>
<div class="b" style="left:1756.3px;top:646px;width:19px;height:4px;background:#d9d9d9"></div>
<div class="sel" style="left:1790.7px;top:500.7px;width:304.6px;height:63px;"></div>
<div class="b" style="left:1814px;top:522px;width:20.5px;height:20.5px;background:#f20d0d"></div>
<span class="t" id="defect" style="left:1845.2px;top:518.3px;font-size:28.5px;color:#1f1f1f;letter-spacing:0.685px;">Defect</span>
<svg class="ic " style="left:2052px;top:525px" width="20" height="14" viewBox="0 0 20 14" ><path d="M1.2 1.4 L10 12 L18.8 1.4" fill="none" stroke="#b5b5b5" stroke-width="2.4" stroke-linecap="butt" stroke-linejoin="miter"/></svg>
<div class="sel" style="left:2116.3px;top:500.7px;width:305px;height:63px;"></div>
<span class="t" id="pix" style="left:2139.2px;top:518.3px;font-size:28.5px;color:#1f1f1f;letter-spacing:-0.001px;">Pixel Count</span>
<svg class="ic " style="left:2378px;top:525px" width="20" height="14" viewBox="0 0 20 14" ><path d="M1.2 1.4 L10 12 L18.8 1.4" fill="none" stroke="#b5b5b5" stroke-width="2.4" stroke-linecap="butt" stroke-linejoin="miter"/></svg>
<div class="sel" style="left:2442.7px;top:500.7px;width:239.6px;height:63px;"></div>
<span class="t" id="all" style="left:2467.5px;top:518.3px;font-size:28.5px;color:#1f1f1f;letter-spacing:0.556px;">All</span>
<svg class="ic " style="left:2639px;top:525px" width="20" height="14" viewBox="0 0 20 14" ><path d="M1.2 1.4 L10 12 L18.8 1.4" fill="none" stroke="#b5b5b5" stroke-width="2.4" stroke-linecap="butt" stroke-linejoin="miter"/></svg>
<div class="sel" style="left:2703.7px;top:500.7px;width:239.3px;height:63px;"></div>
<span class="t" id="lt" style="left:2727.0px;top:519.6px;font-size:28.5px;color:#1f1f1f;letter-spacing:0.304px;">&lt;</span>
<svg class="ic " style="left:2900px;top:525px" width="20" height="14" viewBox="0 0 20 14" ><path d="M1.2 1.4 L10 12 L18.8 1.4" fill="none" stroke="#b5b5b5" stroke-width="2.4" stroke-linecap="butt" stroke-linejoin="miter"/></svg>
<div class="sel" style="left:2964.7px;top:500.7px;width:305.3px;height:63px;"></div>
<span class="t" id="ten" style="left:2987.2px;top:518.3px;font-size:28.5px;color:#1f1f1f;letter-spacing:-1.063px;">10</span>
<svg class="ic " style="left:3311.5px;top:521.5px" width="22.5" height="22.5" viewBox="0 0 22.5 22.5" ><path d="M1.5 1.5 L21.0 21.0 M21.0 1.5 L1.5 21.0" fill="none" stroke="#111" stroke-width="3" stroke-linecap="butt" stroke-linejoin="round"/></svg>
<div class="dash" style="left:1790.7px;top:612.7px;width:1479.3px;height:62.6px;"></div>
<svg class="ic " style="left:2456.3px;top:632.5px" width="23" height="23" viewBox="0 0 23 23" ><path d="M11.5 0V23M0 11.5H23" fill="none" stroke="#1f1f1f" stroke-width="2.2" stroke-linecap="butt" stroke-linejoin="round"/></svg>
<span class="t" id="addr" style="left:2500.1px;top:629.9px;font-size:28.5px;color:#1f1f1f;letter-spacing:-0.022px;">Add rule</span>
<div class="ln" style="left:1750px;top:772px;width:1586px;height:2px;"></div>
<div class="dash" style="left:1750.7px;top:822.7px;width:1585.3px;height:62.6px;"></div>
<svg class="ic " style="left:2427.7px;top:842.5px" width="23" height="23" viewBox="0 0 23 23" ><path d="M11.5 0V23M0 11.5H23" fill="none" stroke="#1f1f1f" stroke-width="2.2" stroke-linecap="butt" stroke-linejoin="round"/></svg>
<span class="t" id="addg" style="left:2470.8px;top:840.1px;font-size:28.5px;color:#1f1f1f;letter-spacing:0.238px;">Add rule group</span>
<div class="ln" style="left:1750px;top:982px;width:1586px;height:2px;"></div>
<div class="btnp" style="left:3085px;top:1032px;width:251px;height:64px;"></div>
<span class="t" id="save" style="left:3117.0px;top:1050.1px;font-size:28.5px;color:#fff;letter-spacing:-0.214px;">Save &amp; Deploy</span>
<div class="b" style="left:3292px;top:1786px;width:80px;height:80px;border-radius:50%;background:#722ed1;box-shadow:0 6px 24px 4px rgba(0,0,0,.10),0 2px 6px rgba(0,0,0,.08)"></div>
<svg class="ic " style="left:3314px;top:1808px" width="36" height="36" viewBox="0 0 36 36" ><g fill="none" stroke="#fff" stroke-width="2.6" stroke-linecap="round" stroke-linejoin="round"><circle cx="18" cy="18" r="16.4"/><path d="M12.6 14.4 C12.6 10.6 15.2 8.8 18 8.8 C20.8 8.8 23.4 10.6 23.4 13.6 C23.4 17 18 17.4 18 21.6" stroke-linecap="butt"/></g><circle cx="18" cy="26.4" r="1.8" fill="#fff"/></svg>
</main>
<svg class="ic" style="left:0;top:1942px" width="20" height="20" viewBox="0 0 30 30"><path d="M0 0 V30 H30 Q2 30 0 0Z" fill="#15181c"/></svg>
<svg class="ic" style="left:3400px;top:1942px" width="20" height="20" viewBox="0 0 30 30"><path d="M30 0 V30 H0 Q28 30 30 0Z" fill="#3a3a38"/></svg>
<div class="b" style="left:0px;top:0px;width:2px;height:1962px;background:#11253a"></div>
</div>
<script>(function(){var w=window.innerWidth||3420;if(w>200&&w<3400){document.getElementById("app").style.zoom=(w/3420);}})();</script>
</body>
</html>
